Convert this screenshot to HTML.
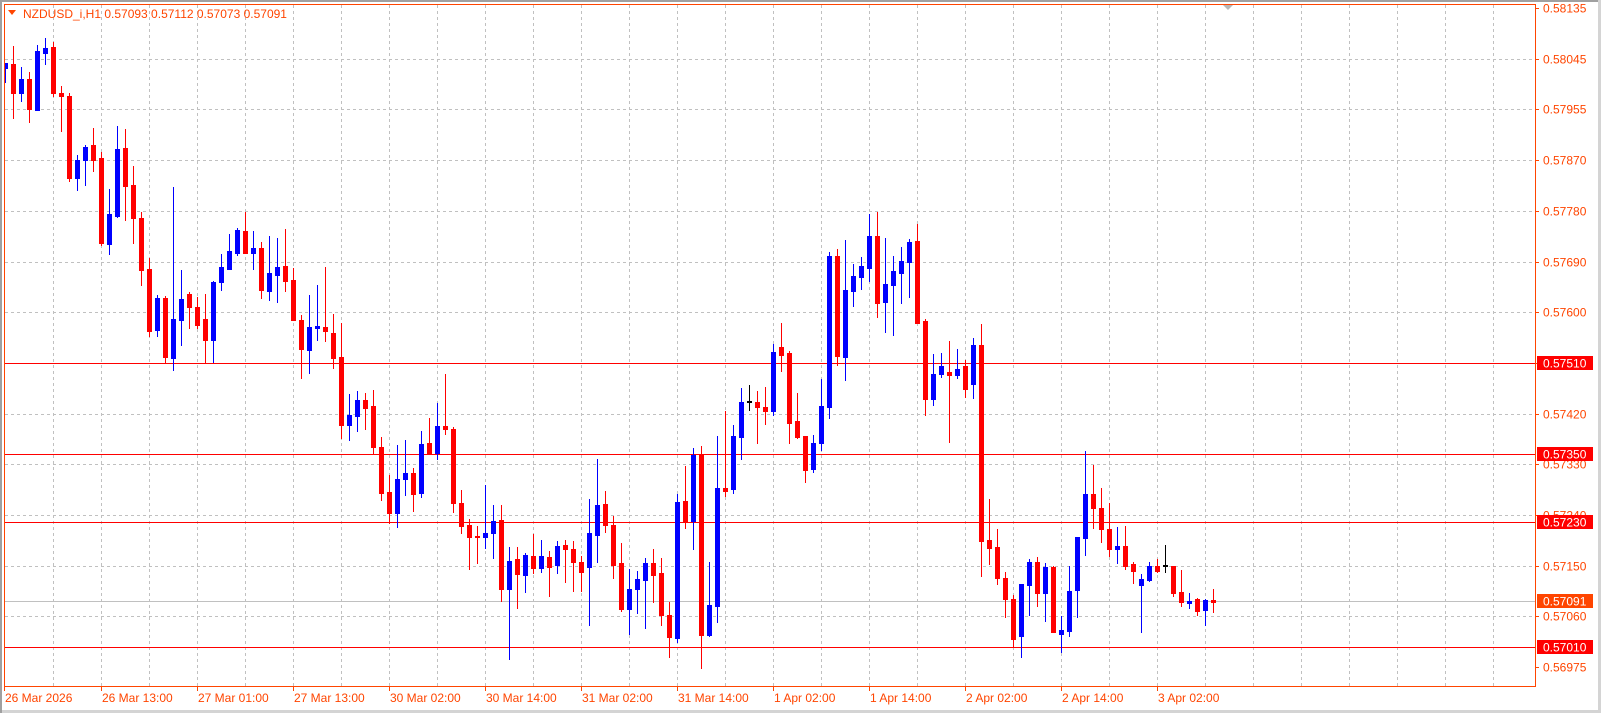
<!DOCTYPE html>
<html><head><meta charset="utf-8">
<style>
html,body{margin:0;padding:0;background:#fff;width:1601px;height:713px;overflow:hidden}
svg{display:block}
text{font-family:"Liberation Sans",sans-serif;font-size:12px}
</style></head>
<body>
<svg id="s" width="1601" height="713" xmlns="http://www.w3.org/2000/svg">
<rect x="0" y="0" width="1601" height="713" fill="#fff"/>
<rect x="0" y="0" width="1601" height="2" fill="#a0a0a0"/>
<rect x="1598" y="0" width="3" height="713" fill="#d4d4d4"/>
<rect x="0" y="710" width="1601" height="3" fill="#d4d4d4"/>
<rect x="0" y="0" width="2" height="713" fill="#a0a0a0"/>
<g id="grid"></g>
<g id="lines"></g>
<g id="candles"></g>
<g id="axis"></g>
<polygon points="1223,5 1233,5 1228,10" fill="#b8b8b8"/>
<polygon points="8,10 16,10 12,15" fill="#ff4500"/>
<text x="23" y="18" fill="#ff4500">NZDUSD_i,H1  0.57093 0.57112 0.57073 0.57091</text>
</svg>
<script>
var NS="http://www.w3.org/2000/svg";
function el(p,t,a,txt){var e=document.createElementNS(NS,t);for(var k in a)e.setAttribute(k,a[k]);if(txt!==undefined)e.textContent=txt;p.appendChild(e);return e;}
var g=document.getElementById('grid'),L=document.getElementById('lines'),C=document.getElementById('candles'),A=document.getElementById('axis');
// vertical grid
for(var x=53;x<1535;x+=48){el(g,'line',{x1:x+.5,y1:5,x2:x+.5,y2:686,stroke:'#c0c0c0','stroke-dasharray':'3,3','stroke-width':1});}
var labs=["0.58135","0.58045","0.57955","0.57870","0.57780","0.57690","0.57600","0.57510","0.57420","0.57330","0.57240","0.57150","0.57060","0.56975"];
for(var k=0;k<14;k++){var y=Math.round(8+50.7*k);
 if(k>0&&k<13)el(g,'line',{x1:5,y1:y+.5,x2:1535,y2:y+.5,stroke:'#c0c0c0','stroke-dasharray':'3,3','stroke-width':1});
 el(A,'rect',{x:1535,y:y,width:4,height:1,fill:'#ff4500'});
 el(A,'text',{x:1543,y:y+4.5,fill:'#ff4500'},labs[k]);}
// frame
el(A,'rect',{x:4,y:4,width:1531,height:1,fill:'#ff4500'});
el(A,'rect',{x:4,y:4,width:1,height:683,fill:'#ff4500'});
el(A,'rect',{x:1535,y:4,width:1,height:683,fill:'#ff4500'});
el(A,'rect',{x:4,y:686,width:1532,height:1,fill:'#ff4500'});
// time labels
var tl=["26 Mar 2026","26 Mar 13:00","27 Mar 01:00","27 Mar 13:00","30 Mar 02:00","30 Mar 14:00","31 Mar 02:00","31 Mar 14:00","1 Apr 02:00","1 Apr 14:00","2 Apr 02:00","2 Apr 14:00","3 Apr 02:00"];
for(var i=0;i<tl.length;i++){var tx=4+96*i+(i>0?1:0);el(A,'rect',{x:tx,y:687,width:1,height:4,fill:'#ff4500'});el(A,'text',{x:tx+1,y:702,fill:'#ff4500'},tl[i]);}
// horizontal levels
function hl(y,col,txt,bg){el(L,'rect',{x:5,y:y,width:1530,height:1,fill:col});
 el(A,'rect',{x:1537,y:y-7,width:56,height:14,fill:bg});
 el(A,'text',{x:1543,y:y+4.5,fill:'#fff'},txt);}
hl(363,'#ff0000','0.57510','#ff0000');
hl(454,'#ff0000','0.57350','#ff0000');
hl(522,'#ff0000','0.57230','#ff0000');
hl(601,'#c0c0c0','0.57091','#ff4500');
hl(647,'#ff0000','0.57010','#ff0000');
var d="b 63 63 68 82|r 46 64 93 118|b 67 79 93 101|r 72 79 109 122|b 45 51 110 110|b 38 48 53 64|r 42 47 93 96|r 86 93 96 131|r 93 96 178 181|b 155 160 178 190|b 145 147 160 185|r 128 145 160 171|r 152 158 243 245|b 189 214 244 254|b 126 149 216 217|r 129 148 186 220|r 166 185 218 243|r 212 218 270 285|r 258 269 331 336|b 295 298 330 336|r 296 298 357 362|b 187 319 358 370|b 270 299 320 345|r 292 294 307 328|r 297 307 325 328|r 294 319 340 363|b 281 282 340 362|b 254 267 282 290|b 234 251 269 269|b 228 230 253 255|r 212 231 253 253|b 231 248 253 269|r 242 248 290 298|b 236 273 291 300|b 238 267 275 302|r 229 266 281 291|r 268 280 320 320|r 315 320 349 378|b 295 327 350 373|b 285 326 328 340|r 267 327 331 341|r 314 333 358 368|r 323 357 425 438|b 394 415 425 440|b 391 400 416 431|r 393 400 408 429|r 390 406 447 454|r 437 447 493 500|r 475 492 513 523|b 445 479 513 527|b 440 473 479 495|r 468 473 494 511|b 431 444 493 497|r 418 443 454 454|b 403 426 453 459|r 374 426 429 434|r 427 429 503 512|r 490 503 526 533|r 519 525 537 569|r 526 536 537 563|b 485 533 537 548|b 505 521 533 558|r 505 520 589 601|b 547 561 589 659|r 547 559 574 608|b 553 555 575 592|r 534 556 568 573|b 540 556 568 572|r 551 557 567 596|b 541 546 565 573|r 540 545 549 582|r 541 549 562 591|r 556 562 572 591|b 499 533 567 625|b 459 505 535 562|r 491 504 525 532|r 516 525 565 578|r 543 563 609 611|b 569 589 609 634|b 571 579 589 613|b 558 563 580 628|r 549 563 575 602|r 558 573 615 625|r 602 615 637 657|b 494 502 638 642|r 466 501 521 528|b 448 455 521 549|r 446 455 635 668|b 562 605 635 636|b 436 488 606 622|r 411 488 491 496|b 425 436 489 493|b 388 402 437 459|k 385 401 402 410|r 391 402 407 443|r 387 407 411 424|b 344 352 411 415|r 323 347 355 371|r 351 353 423 443|r 393 421 437 438|r 436 436 470 482|b 435 443 469 472|b 379 406 443 450|b 252 256 407 418|r 249 256 356 365|b 240 290 357 380|b 264 276 291 306|b 257 266 277 289|b 214 236 268 281|r 212 236 303 317|b 238 284 302 332|b 256 271 285 335|b 247 261 273 303|b 239 242 262 297|r 224 241 323 323|r 319 321 399 415|b 354 374 399 405|b 353 366 374 377|r 341 372 375 442|b 349 369 375 378|r 360 366 389 397|b 338 345 384 398|r 324 345 541 576|r 499 540 548 564|r 529 547 578 584|r 572 578 599 617|r 595 599 639 647|b 584 584 636 657|b 559 562 585 615|r 557 562 593 606|b 563 567 593 621|r 566 567 632 632|b 616 630 634 652|b 566 591 631 636|b 537 537 590 617|b 451 494 538 555|r 465 494 508 528|r 488 508 529 542|r 503 529 549 556|b 527 546 549 563|r 526 546 566 569|r 562 564 571 583|b 574 579 585 632|b 562 566 580 581|r 559 566 571 572|k 545 565 566 572|r 566 566 593 596|r 570 592 602 606|b 593 601 603 608|r 598 599 611 615|b 599 600 610 625|r 589 600 602 612".split('|');
var cols={b:'#0000ff',r:'#ff0000',k:'#000000'};
for(var i=0;i<d.length;i++){var p=d[i].split(' ');var c=cols[p[0]];var h=+p[1],o=+p[2],cl=+p[3],lo=+p[4];
 var cx=5+8*i;
 el(C,'rect',{x:cx,y:h,width:1,height:Math.max(1,lo-h+1),fill:c});
 if(i==0){el(C,'rect',{x:5,y:o,width:3,height:Math.max(1,cl-o+1),fill:c});}
 else el(C,'rect',{x:cx-2,y:o,width:5,height:Math.max(1,cl-o+1),fill:c});}
</script>
</body></html>
